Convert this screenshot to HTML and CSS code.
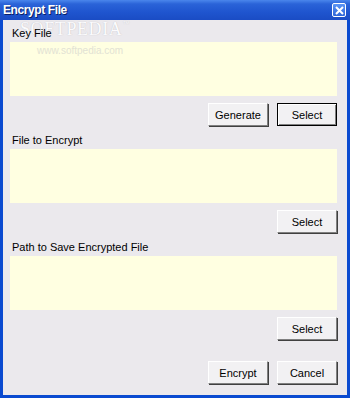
FILE: index.html
```html
<!DOCTYPE html>
<html lang="en">
<head>
    <meta charset="UTF-8">
    <title>Encrypt File</title>
    <link rel="stylesheet" href="styles.css">
</head>
<body>
    <div class="window">
        <div class="titlebar">
            <span class="title">Encrypt File</span>
            <span class="close">
                <svg width="9" height="9" viewBox="0 0 9 9"><path d="M1 1 L8 8 M8 1 L1 8" stroke="#fff" stroke-width="2"/></svg>
            </span>
        </div>
        <div class="content">
            <!-- marca d'agua -->
            <div class="watermark">SOFTPEDIA<sup>™</sup></div>
            <div class="watermark-url">www.softpedia.com</div>

            <label class="field-label">Key File</label>
            <textarea class="field"></textarea>
            <div class="row">
                <button class="btn">Generate</button>
                <button class="btn default">Select</button>
            </div>

            <label class="field-label next">File to Encrypt</label>
            <textarea class="field"></textarea>
            <div class="row">
                <button class="btn">Select</button>
            </div>

            <label class="field-label next">Path to Save Encrypted File</label>
            <textarea class="field"></textarea>
            <div class="row">
                <button class="btn">Select</button>
            </div>

            <div class="row footer">
                <button class="btn">Encrypt</button>
                <button class="btn">Cancel</button>
            </div>
        </div>
    </div>
</body>
</html>
```

FILE: styles.css
```css
* {
    margin: 0;
    padding: 0;
    box-sizing: border-box;
}

body {
    font-family: "Liberation Sans", Arial, sans-serif;
    background-color: #ebe9ed;
}

.window {
    width: 350px;
    height: 398px;
    background: #0a4ad0;
    padding: 0 3px 3px 3px;
    display: flex;
    flex-direction: column;
}

.titlebar {
    height: 20px;
    margin: 0 -3px;
    padding: 0 4px 0 3px;
    display: flex;
    align-items: center;
    justify-content: space-between;
    background: linear-gradient(to bottom, #4a86ec 0%, #2a63d8 20%, #1f55cf 60%, #1a4cc4 100%);
}

.title {
    color: #fff;
    font-family: "Liberation Sans", Arial, sans-serif;
    font-weight: bold;
    font-size: 12px;
    letter-spacing: -0.4px;
    text-shadow: 1px 1px 0 #0a1f66;
}

.close {
    width: 14px;
    height: 14px;
    border: 1px solid #fff;
    border-radius: 2px;
    background: linear-gradient(to bottom, #5b95f5, #2e66d9);
    display: flex;
    align-items: center;
    justify-content: center;
}

.content {
    position: relative;
    flex: 1;
    background: #ebe9ed;
    padding: 7px 10px 0 7px;
    display: flex;
    flex-direction: column;
    font-size: 11px;
    color: #000;
}

.watermark {
    position: absolute;
    left: 17px;
    top: -1px;
    font-family: "Liberation Serif", serif;
    font-size: 18px;
    letter-spacing: 0.6px;
    color: #fbfbfd;
    text-shadow: 0 0 1px #b8b6bb;
}

.watermark sup {
    font-family: "Liberation Sans", sans-serif;
    font-size: 7px;
    vertical-align: 9px;
}

.watermark-url {
    position: absolute;
    left: 34px;
    top: 25px;
    font-size: 10px;
    color: #e2e2d4;
    z-index: 1;
}

.field-label {
    display: block;
    height: 13px;
    line-height: 13px;
    margin-left: 2px;
    margin-bottom: 2px;
    font-size: 11px;
    position: relative;
}

.field-label.next {
    margin-top: 8px;
}

.field {
    display: block;
    width: 100%;
    height: 54px;
    border: none;
    background: #ffffe1;
    resize: none;
}

.row {
    display: flex;
    justify-content: flex-end;
    gap: 9px;
    margin-top: 7px;
}

.row.footer {
    margin-top: 21px;
}

.btn {
    width: 60px;
    height: 23px;
    font-family: "Liberation Sans", Arial, sans-serif;
    font-size: 11px;
    color: #000;
    background: #f2f1f3;
    border: 1px solid;
    border-color: #fff #808080 #808080 #fff;
    box-shadow: 1px 1px 0 #404040;
}

.btn.default {
    border: 1px solid #000;
    box-shadow: inset 1px 1px 0 #fff, inset -1px -1px 0 #808080;
}
```
